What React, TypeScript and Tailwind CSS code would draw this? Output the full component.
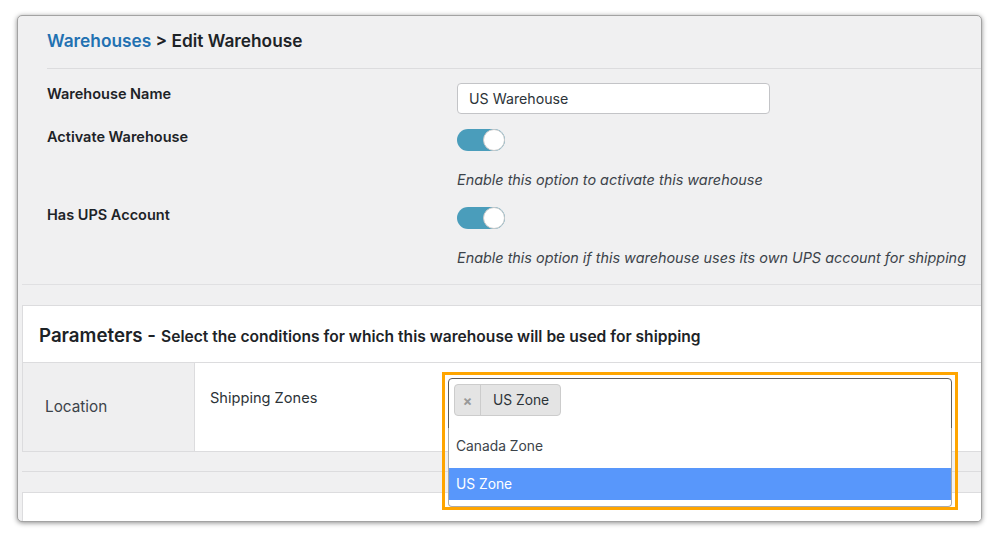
import React from "react";

function Toggle() {
  return (
    <div className="w-[48px] h-[22px] rounded-full bg-[#4a9dbb] flex justify-end items-center">
      <div className="w-[22px] h-[22px] rounded-full bg-white border border-[#c9c9c9]" />
    </div>
  );
}

export default function App() {
  return (
    <div
      className="w-[1000px] h-[538px] bg-white pt-[15px] pl-[17px] overflow-hidden"
      style={{ fontFamily: "Inter, 'Noto Sans', 'Liberation Sans', sans-serif" }}
    >
      <div className="w-[965px] h-[507px] border border-[#a3a3a3] rounded-[5px] bg-[#f0f0f1] overflow-hidden shadow-[0_1px_5px_rgba(0,0,0,0.45)]">
        <div className="pl-[4px]">
          {/* Top section */}
          <div className="border-b border-[#e0e0e2] pb-[16px]">
            <div className="ml-[25px] pt-[13px] pb-[15px] border-b border-[#dcdcde]">
              <h1 className="text-[17.3px] leading-[24px] font-semibold text-[#1d2327]">
                <span className="text-[#2271b1]">Warehouses</span> &gt; Edit Warehouse
              </h1>
            </div>
            <div className="pl-[25px]">
              <div className="flex items-start mt-[14px]">
                <div className="w-[410px] pt-[1px] text-[14.5px] leading-[20px] font-semibold text-[#1d2327]">
                  Warehouse Name
                </div>
                <div className="w-[313px] h-[31px] bg-white border border-[#c3c4c7] rounded-[4px] flex items-center pl-[11px] text-[14.2px] text-[#2c3338]">
                  US Warehouse
                </div>
              </div>
              <div className="flex items-start mt-[13px]">
                <div className="w-[410px] text-[14.5px] leading-[20px] font-semibold text-[#1d2327]">
                  Activate Warehouse
                </div>
                <div className="flex flex-col">
                  <div className="mt-[2px]">
                    <Toggle />
                  </div>
                  <div className="mt-[19px] text-[14.4px] leading-[20px] italic text-[#3c434a]">
                    Enable this option to activate this warehouse
                  </div>
                </div>
              </div>
              <div className="flex items-start mt-[15px]">
                <div className="w-[410px] text-[14.5px] leading-[20px] font-semibold text-[#1d2327]">
                  Has UPS Account
                </div>
                <div className="flex flex-col">
                  <div className="mt-[2px]">
                    <Toggle />
                  </div>
                  <div className="mt-[19px] text-[14.4px] leading-[20px] italic text-[#3c434a] whitespace-nowrap">
                    Enable this option if this warehouse uses its own UPS account for shipping
                  </div>
                </div>
              </div>
            </div>
          </div>

          {/* Parameters card */}
          <div className="mt-[20px] bg-white border-y border-l border-[#dcdcde]">
            <div className="h-[57px] pl-[16px] flex items-baseline pt-[17px] border-b border-[#dcdcde] text-[#1d2327] whitespace-nowrap">
              <span className="text-[18.7px] leading-[26px] font-semibold">Parameters -</span>
              <span className="ml-[5px] text-[15.6px] leading-[22px] font-semibold">
                Select the conditions for which this warehouse will be used for shipping
              </span>
            </div>
            <div className="flex h-[88px]">
              <div className="w-[172px] bg-[#efeff0] border-r border-[#dcdcde] flex items-center pl-[22px] text-[15.3px] text-[#3c434a]">
                Location
              </div>
              <div className="flex pl-[15px]">
                <div className="w-[238px] pt-[25px] text-[14.6px] leading-[20px] text-[#2c3338]">
                  Shipping Zones
                </div>
                <div className="pt-[15px]">
                  <div className="relative w-[504px] h-[51px] border border-[#5e5e5e] rounded-t-[4px] bg-white">
                    <div className="ml-[5px] mt-[5px] h-[32px] inline-flex items-stretch bg-[#e4e4e4] border border-[#cccccc] rounded-[4px] text-[13.8px] text-[#2c3338]">
                      <div className="w-[26px] flex items-center justify-center border-r border-[#cccccc] text-[#999999] text-[14px] font-bold">
                        ×
                      </div>
                      <div className="flex items-center pl-[12px] pr-[11px]">US Zone</div>
                    </div>
                    <div className="absolute left-[-1px] top-full w-[504px] bg-white border-x border-b border-[#aaaaaa] rounded-b-[4px] text-[13.8px] z-10">
                      <div className="h-[40px] pt-[8px] pl-[7px] leading-[20px] text-[#3c434a]">Canada Zone</div>
                      <div className="h-[32px] flex items-center pl-[7px] bg-[#5897fb] text-white">US Zone</div>
                      <div className="h-[6px]" />
                    </div>
                    <div className="absolute left-[-7px] top-[-7px] w-[516px] h-[138px] border-[3px] border-[#ffa500] pointer-events-none z-20" />
                  </div>
                </div>
              </div>
            </div>
          </div>

          <div className="h-[20px] border-b border-[#dcdcde]" />
          <div className="mt-[20px] h-[60px] bg-white border-y border-l border-[#dcdcde]" />
        </div>
      </div>
    </div>
  );
}
